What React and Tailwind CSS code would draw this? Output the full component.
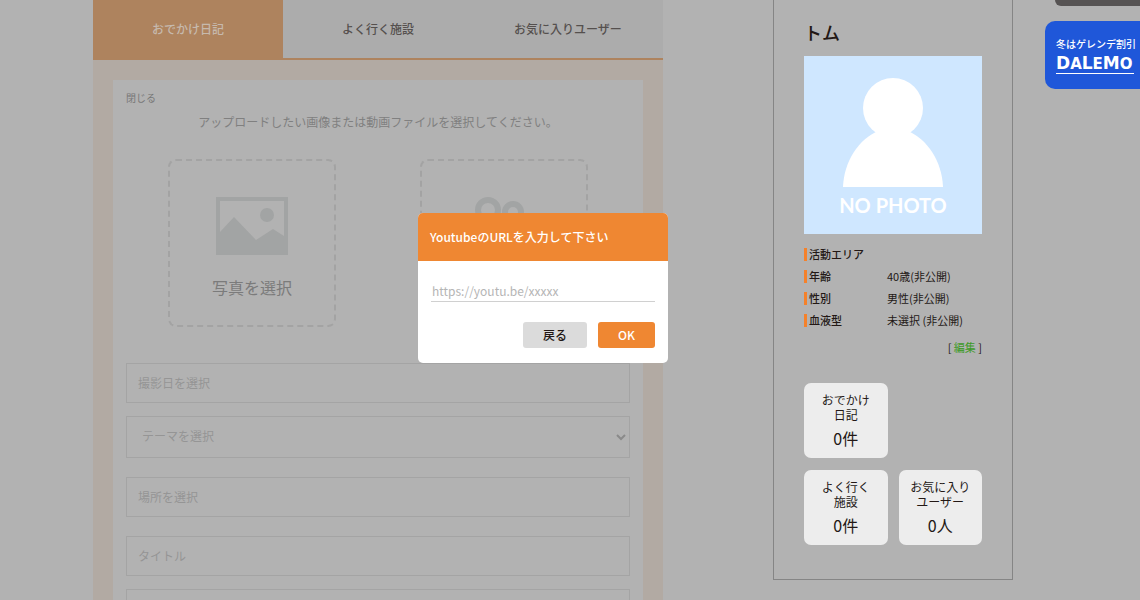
import { useState } from 'react';
import clsx from 'clsx';

const tabs = ['おでかけ日記', 'よく行く施設', 'お気に入りユーザー'];

const profile = [
  { label: '活動エリア', value: '' },
  { label: '年齢', value: '40歳(非公開)' },
  { label: '性別', value: '男性(非公開)' },
  { label: '血液型', value: '未選択 (非公開)' },
];

const counters = [
  { lines: ['おでかけ', '日記'], count: '0件', className: 'col-start-1' },
  { lines: ['よく行く', '施設'], count: '0件', className: 'col-start-1' },
  { lines: ['お気に入り', 'ユーザー'], count: '0人', className: 'col-start-2' },
];

const fieldClass =
  'block w-full border border-[#a4a4a4] bg-transparent px-[11px] pb-[2px] text-xs text-[#959595] placeholder:text-[#959595] outline-none';

function PhotoIcon() {
  return (
    <svg width="72" height="58" viewBox="0 0 72 58" aria-hidden="true">
      <path fill="#a2a4a4" fillRule="evenodd" d="M0 0H72V58H0ZM4 4V35L18 20L40 43L57 32L68 39V4Z" />
      <circle cx="51" cy="18" r="7" fill="#a2a4a4" />
    </svg>
  );
}

function MovieIcon() {
  return (
    <svg width="72" height="58" viewBox="0 0 72 58" aria-hidden="true">
      <g fill="none" stroke="#a2a4a4" strokeWidth="6">
        <circle cx="20" cy="13" r="10" />
        <circle cx="45" cy="15" r="8" />
      </g>
      <path fill="#a2a4a4" d="M6 28H54V36L66 29V55L54 48V58H6Z" />
    </svg>
  );
}

function UploadBox({ icon, label }) {
  return (
    <button
      type="button"
      className="flex h-[168px] w-[168px] flex-col items-center rounded-lg border-2 border-dashed border-[#a3a3a3] pt-9 text-base text-[#7b7b7b]"
    >
      {icon}
      <span className="mt-5">{label}</span>
    </button>
  );
}

function DiaryForm() {
  return (
    <form className="bg-[#b2b2b2] px-[13px] pt-2 pb-5">
      <button type="button" className="block text-[10px] leading-5 text-[#777]">閉じる</button>
      <p className="mt-1 text-center text-xs leading-5 text-[#808080]">
        アップロードしたい画像または動画ファイルを選択してください。
      </p>
      <div className="mt-[27px] grid grid-cols-2 justify-items-center">
        <UploadBox icon={<PhotoIcon />} label="写真を選択" />
        <UploadBox icon={<MovieIcon />} label="動画を選択" />
      </div>
      <input aria-label="撮影日" placeholder="撮影日を選択" className={clsx(fieldClass, 'mt-9 h-10')} />
      <div className="relative mt-[13px]">
        <select aria-label="テーマ" className={clsx(fieldClass, 'h-[42px] appearance-none pl-[15px]')}>
          <option>テーマを選択</option>
        </select>
        <svg className="pointer-events-none absolute top-[17px] right-1 h-2 w-[10px]" viewBox="0 0 10 8" aria-hidden="true">
          <path d="M1 2L5 6L9 2" fill="none" stroke="#8a8a8a" strokeWidth="2" />
        </svg>
      </div>
      <input aria-label="場所" placeholder="場所を選択" className={clsx(fieldClass, 'mt-[19px] h-10')} />
      <input aria-label="タイトル" placeholder="タイトル" className={clsx(fieldClass, 'mt-[19px] h-10')} />
      <textarea aria-label="本文" className={clsx(fieldClass, 'mt-[13px] h-32 resize-none')} />
    </form>
  );
}

function NoPhoto() {
  return (
    <div className="flex aspect-square flex-col items-center bg-[#cfe7ff] pt-[21px]">
      <svg width="102" height="110" viewBox="0 0 102 110" aria-hidden="true">
        <circle cx="51" cy="31" r="30" fill="#fff" />
        <path fill="#fff" d="M1 110C2 84 17 62 36 54H66C85 62 100 84 101 110Z" />
      </svg>
      <span className="mt-1 font-[Lato,sans-serif] text-xl leading-7 font-bold text-white">NO PHOTO</span>
    </div>
  );
}

function Sidebar() {
  return (
    <aside className="h-[580px] w-60 shrink-0 border border-t-0 border-[#858585] px-[30px] pt-[18px] text-[#231815]">
      <h2 className="text-lg leading-7 font-medium">トム</h2>
      <div className="mt-[10px]">
        <NoPhoto />
      </div>
      <dl className="mt-[9px] text-[11px] leading-[22px]">
        {profile.map((row) => (
          <div key={row.label} className="flex items-center">
            <span className="h-[13px] w-[3px] bg-[#f5812a]" />
            <dt className="w-20 pl-[2px] font-medium">{row.label}</dt>
            <dd>{row.value}</dd>
          </div>
        ))}
      </dl>
      <p className="mt-[5px] text-right text-[11px] leading-[22px]">
        [ <a href="#edit" className="text-[#3c9a26]">編集</a> ]
      </p>
      <div className="mt-[25px] grid grid-cols-2 gap-x-[11px] gap-y-3">
        {counters.map((c) => (
          <a
            key={c.lines[0]}
            href="#list"
            className={clsx('flex h-[75px] flex-col items-center rounded-[7px] bg-[#ededed] pt-[9px] text-xs leading-[15px]', c.className)}
          >
            <span>{c.lines[0]}</span>
            <span>{c.lines[1]}</span>
            <span className="mt-1 text-base leading-6">{c.count}</span>
          </a>
        ))}
      </div>
    </aside>
  );
}

function SideBanners() {
  return (
    <div className="absolute top-0 right-0 flex flex-col items-end">
      <div className="h-[6px] w-[85px] rounded-bl-lg bg-[#565353]" />
      <a href="#dalemo" className="mt-[15px] flex h-[68px] w-[95px] flex-col rounded-l-[10px] bg-[#1f57d9] pt-[15px] pl-[11px] text-white">
        <span className="text-[10px] leading-4 font-medium whitespace-nowrap">冬はゲレンデ割引</span>
        <span className="mt-[2px] w-[78px] border-b border-white font-['DejaVu_Sans',sans-serif] text-[15px] leading-[18px] font-bold whitespace-nowrap">
          <span className="text-[17px] leading-[18px]">D</span>A<span className="text-[17px] leading-[18px]">L</span>E
          <span className="text-[17px] leading-[18px]">M</span>O
        </span>
      </a>
    </div>
  );
}

function YoutubeDialog() {
  const [url, setUrl] = useState('');

  return (
    <div className="fixed inset-0 flex items-center justify-center pr-[54px] pb-6">
      <div role="dialog" aria-labelledby="youtube-title" className="w-[250px] overflow-hidden rounded-[5px] bg-white">
        <h2 id="youtube-title" className="bg-[#ef8732] px-3 text-xs leading-[48px] font-medium text-white">
          YoutubeのURLを入力して下さい
        </h2>
        <div className="px-[13px] pt-5 pb-[15px]">
          <input
            type="url"
            aria-labelledby="youtube-title"
            placeholder="https://youtu.be/xxxxx"
            value={url}
            onChange={(e) => setUrl(e.target.value)}
            className="block h-[21px] w-full border-b border-[#d0d0d0] px-px pb-[2px] text-xs text-[#333] outline-none placeholder:text-[#b5b5b5]"
          />
          <div className="mt-5 flex justify-end gap-[11px] text-xs font-medium">
            <button type="button" className="h-[26px] w-16 rounded-[3px] bg-[#dbdbdb] text-[#231815]">戻る</button>
            <button type="button" className="h-[26px] w-[57px] rounded-[3px] bg-[#ef8732] text-white">OK</button>
          </div>
        </div>
      </div>
    </div>
  );
}

export default function App() {
  return (
    <div className="relative h-screen overflow-hidden bg-[#b2b2b2] pr-[34px] font-['Noto_Sans_CJK_JP',sans-serif]">
      <div className="mx-auto flex max-w-[920px] items-start gap-[110px]">
        <main className="min-w-0 flex-1 bg-[#b2aaa3]">
          <nav className="grid grid-cols-3 border-b-2 border-[#ae835e] bg-[#acacac] text-xs leading-[58px] font-medium">
            {tabs.map((tab, i) => (
              <a
                key={tab}
                href="#tab"
                className={clsx('text-center', i === 0 ? 'bg-[#ae835e] text-[#c6b9ad]' : 'text-[#55504e]')}
              >
                {tab}
              </a>
            ))}
          </nav>
          <div className="p-5">
            <DiaryForm />
          </div>
        </main>
        <Sidebar />
      </div>
      <SideBanners />
      <YoutubeDialog />
    </div>
  );
}
